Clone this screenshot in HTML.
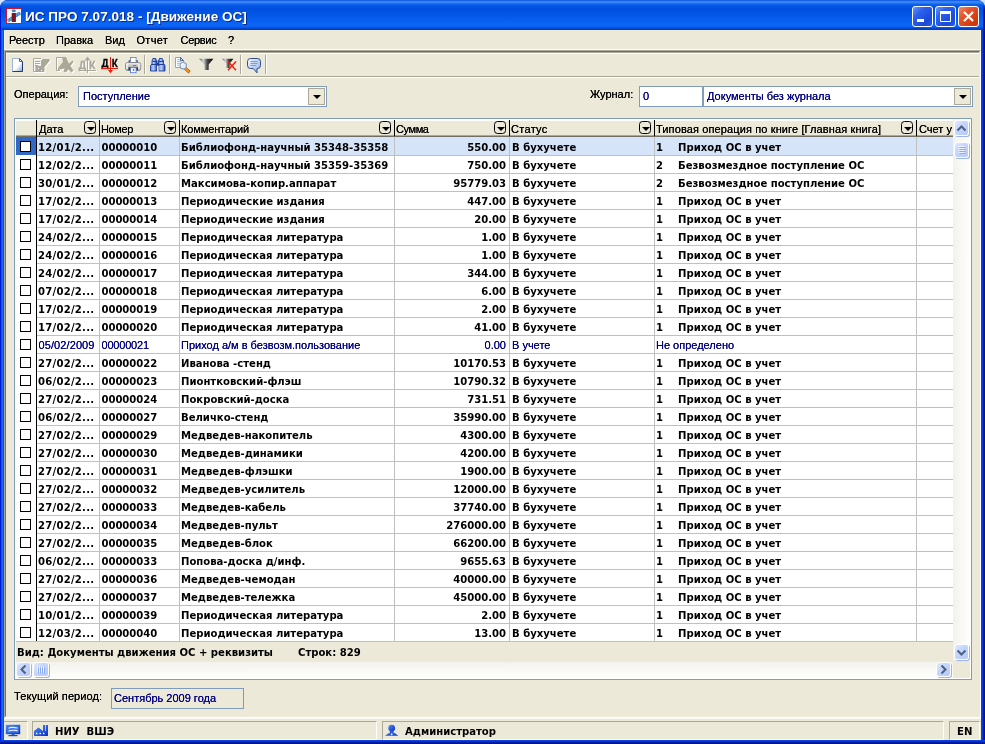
<!DOCTYPE html>
<html lang="ru">
<head>
<meta charset="utf-8">
<title>ИС ПРО 7.07.018 - [Движение ОС]</title>
<style>
html,body{margin:0;padding:0;}
body{width:985px;height:744px;overflow:hidden;background:#d4e2f6;position:relative;
 font-family:"Liberation Sans","DejaVu Sans",sans-serif;font-size:11px;color:#000;}
*{box-sizing:border-box;}
.abs,.win *{position:absolute;}
.win{position:absolute;left:0;top:0;width:985px;height:744px;border-radius:8px 8px 0 0;overflow:hidden;will-change:transform;
 background:#0054e3;}
/* title bar */
.title{left:0;top:0;width:985px;height:30px;
 background:linear-gradient(180deg,#0844d8 0px,#2b7af0 1px,#3d8ef8 2px,#2a78f2 3px,#0f60ea 4.5px,#0455e4 6px,#0050e0 9px,#0355e6 14px,#0860f0 21px,#0c66f6 25px,#0a5eee 27px,#0046d2 28.5px,#0038c0 30px);}
.frameL{left:0;top:30px;width:4px;height:714px;background:linear-gradient(90deg,#0019cf 0,#0019cf 1px,#0c55ec 1px,#0c55ec 2px,#166cf4 2px,#166cf4 3px,#0a50e0 3px);}
.frameR{left:981px;top:30px;width:4px;height:714px;background:linear-gradient(90deg,#0a40e6 0,#0a40e6 1px,#0838de 1px,#0838de 2px,#001fae 2px,#001fae 3px,#00138c 3px);}
.frameB{left:0;top:740px;width:985px;height:4px;background:linear-gradient(180deg,#0a40e6 0,#0a40e6 1px,#0632d4 1px,#0632d4 2px,#001ca0 2px,#001ca0 3px,#00138c 3px);}
.tedgeL{left:0;top:4px;width:1px;height:26px;background:linear-gradient(180deg,rgba(0,25,207,0),#0019cf 6px);}
.tedgeR{left:983px;top:4px;width:2px;height:26px;background:linear-gradient(90deg,#001fae 0,#001fae 1px,#00138c 1px);-webkit-mask-image:linear-gradient(180deg,transparent,#000 6px);mask-image:linear-gradient(180deg,transparent,#000 6px);}
.ttext{left:25px;top:7.5px;height:18px;line-height:18px;white-space:pre;color:#fff;font-weight:bold;letter-spacing:0.04px;
 font-family:"Liberation Sans","DejaVu Sans",sans-serif;font-size:13.5px;text-shadow:1px 1px 0 #0a2a8c;}
.appico{left:6px;top:8px;width:16px;height:16px;}
.tb{top:6px;width:21px;height:21px;border:1px solid #fff;border-radius:3px;
 background:linear-gradient(135deg,#6a98f8 0%,#2e62ee 30%,#1b48d8 75%,#2a5ce8 100%);}
.tb.close{background:linear-gradient(135deg,#f08868 0%,#e4542c 35%,#d23c10 75%,#c83408 100%);}
/* client */
.client{left:4px;top:30px;width:977px;height:710px;background:#ece9d8;border-left:1px solid #f8f3e2;border-right:1px solid #fbf6e4;}
.menu span{top:34px;height:13px;line-height:13px;white-space:pre;}
.mdi{left:4px;top:50px;width:977px;height:668px;background:#ece9d8;
 border-top:1px solid #aca899;border-left:1px solid #aca899;border-right:1px solid #fff;border-bottom:1px solid #fff;}
.mdi2{left:5px;top:51px;width:975px;height:666px;border-top:1px solid #716f64;border-left:1px solid #716f64;border-right:1px solid #ece9d8;border-bottom:1px solid #ece9d8;}
.toolbar{left:6px;top:52px;width:973px;height:24px;border-top:1px solid #aca899;border-left:1px solid #f6f3e6;}
.toolbar:after{content:"";position:absolute;left:0;top:0;width:972px;height:1px;background:#fff;}
.menuline{left:4px;top:49px;width:977px;height:1px;background:#fff;}
.tbline{left:6px;top:76px;width:973px;height:2px;border-top:1px solid #aca899;border-bottom:1px solid #fff;}
.tsep{top:55px;width:2px;height:19px;border-left:1px solid #aca899;border-right:1px solid #fff;}
.lbl{white-space:pre;height:13px;line-height:13px;}
.edit{background:#fff;border:1px solid #7f9db9;}
.edit span{left:4px;top:3px;height:13px;line-height:13px;color:#000080;white-space:pre;}
.dd{width:17px;height:17px;background:#ece9d8;border:1px solid #aca899;}
.dd:after{content:"";position:absolute;left:3.5px;top:6px;border-left:4px solid transparent;border-right:4px solid transparent;border-top:4px solid #000;}
/* grid */
.grid{left:14px;top:118px;width:958px;height:562px;border:1px solid #7f9db9;background:#fff;}
.ghead{left:16px;top:120px;width:937px;height:15px;background:#ece9d8;border-top:1px solid #fff;}
.gheadl{left:16px;top:135px;width:937px;height:2px;border-top:1px solid #aca899;border-bottom:1px solid #716f64;}
.hs{top:120px;width:1px;height:16px;background:#000;}
.ht{top:123px;height:13px;line-height:13px;white-space:pre;}
.fi{top:121px;width:12px;height:13px;border:1px solid #000;border-radius:3.5px;}
.fi:after{content:"";position:absolute;left:1.5px;top:5px;border-left:4px solid transparent;border-right:4px solid transparent;border-top:4px solid #000;}
.vl{top:137px;width:1px;height:505px;background:#c0c0c0;}
.row{left:16px;width:937px;height:19px;border-bottom:1px solid #c0c0c0;
 font-family:"DejaVu Sans Condensed","Liberation Sans",sans-serif;font-weight:bold;font-size:11.2px;}
.row.sel{background:#d6e4fa;}
.row.nrm{font-family:"Liberation Sans","DejaVu Sans",sans-serif;font-weight:normal;font-size:11px;color:#000080;}
.row.nrm .c1{letter-spacing:0.1px;left:22.5px;}
.row.nrm .c2{letter-spacing:-0.2px;}
.row .ind{left:0;top:0;width:20px;height:18px;background:#fff;}
.row.sel .ind{background:#316ac5;}
.row .cb{left:4px;top:4px;width:11px;height:11px;border:1px solid #000;background:#fff;}
.c{top:4px;height:13px;line-height:13px;white-space:pre;}
.c1{left:22px;letter-spacing:0.25px;}.c2{left:85.5px;letter-spacing:-0.05px;}.c3{left:165px;}.c4{right:447px;}.c5{left:496px;}.c6{left:640px;}.c7{left:662px;}
.gstat{left:16px;top:642px;width:937px;height:20px;background:#ece9d8;}
.gstat span{top:4px;height:13px;line-height:13px;white-space:pre;font-weight:bold;font-family:"DejaVu Sans Condensed","Liberation Sans",sans-serif;font-size:11.2px;}
/* scrollbars */
.vsb{left:953px;top:119px;width:17px;height:542px;background:linear-gradient(90deg,#f3f1ec 0,#f8f7f3 40%,#fefefb 100%);}
.hsb{left:16px;top:662px;width:937px;height:16px;background:linear-gradient(180deg,#f3f1ec 0,#f8f7f3 40%,#fefefb 100%);}
.corner{left:953px;top:661px;width:17px;height:17px;background:#ece9d8;}
.sbb{width:15px;height:15px;border:1px solid #fff;border-radius:3px;background:linear-gradient(135deg,#e1eafe 0%,#c6d6fc 40%,#b5c9f8 100%);box-shadow:1px 1px 0 #9db4e8;}
.ht,.lbl,.menu span,.edit span,.row.nrm .c{text-shadow:0 0 0 currentColor;}
/* status bar */
.sbar{left:4px;top:718px;width:977px;height:22px;background:#ece9d8;border-top:1px solid #f8f7f2;}
.pnl{top:721px;height:19px;border-top:1px solid #aca899;border-left:1px solid #aca899;border-right:1px solid #fff;border-bottom:1px solid #fff;}
.st{top:725px;height:13px;line-height:13px;white-space:pre;font-weight:bold;font-family:"DejaVu Sans Condensed","Liberation Sans",sans-serif;font-size:11.2px;}
</style>
</head>
<body>
<div class="win">
 <div class="title"></div>
 <div class="tedgeL"></div><div class="tedgeR"></div>
 <div class="frameL"></div><div class="frameR"></div><div class="frameB"></div>
 <svg class="appico" viewBox="0 0 16 16">
  <rect x="0.5" y="0.5" width="15" height="15" fill="#fff" stroke="#d4142c"/>
  <path d="M1.8 12.8 L14.2 4.8" stroke="#3f8ac8" stroke-width="3.3" fill="none"/>
  <path d="M1.8 12.8 L14.2 4.8" stroke="#8cbce4" stroke-width="1.2" stroke-dasharray="1.4 1.6" fill="none"/>
  <rect x="5.7" y="5" width="4.2" height="9" fill="#7c1428"/>
  <ellipse cx="7.8" cy="2.8" rx="2.1" ry="1.5" fill="#3f8ac8"/>
 </svg>
 <div class="ttext">ИС ПРО 7.07.018 - [Движение ОС]</div>
 <div class="tb" style="left:912px"><svg style="left:0;top:0" width="19" height="19" viewBox="0 0 19 19"><rect x="4" y="12" width="7" height="3" fill="#fff"/></svg></div>
 <div class="tb" style="left:935px"><svg style="left:0;top:0" width="19" height="19" viewBox="0 0 19 19"><path d="M4.5 6 H14.5 V14.5 H4.5 Z M4.5 4.5 H14.5" fill="none" stroke="#fff" stroke-width="1"/><rect x="4" y="4" width="11" height="3" fill="#fff"/></svg></div>
 <div class="tb close" style="left:958px"><svg style="left:0;top:0" width="19" height="19" viewBox="0 0 19 19"><path d="M5 5 L14 14 M14 5 L5 14" stroke="#fff" stroke-width="2.2" stroke-linecap="butt"/></svg></div>

 <div class="client"></div>
 <div class="menu">
  <span style="left:9px">Реестр</span><span style="left:56px">Правка</span><span style="left:105px">Вид</span><span style="left:136.5px;letter-spacing:0.3px">Отчет</span><span style="left:180.5px;letter-spacing:-0.3px">Сервис</span><span style="left:228px">?</span>
 </div>
 <div class="menuline"></div><div class="mdi"></div><div class="mdi2"></div>
 <div class="toolbar"></div><div class="tbline"></div>
 <div class="tsep" style="left:144px"></div><div class="tsep" style="left:169px"></div><div class="tsep" style="left:240px"></div><div class="tsep" style="left:265px"></div>
 <svg class="ticons" style="left:0;top:50px" width="300" height="30" viewBox="0 50 300 30">
  <defs>
   <linearGradient id="gdoc" x1="1" y1="1" x2="0.3" y2="0.3"><stop offset="0" stop-color="#8fa6cc"/><stop offset="0.6" stop-color="#e4ebf6"/><stop offset="1" stop-color="#fff"/></linearGradient>
   <linearGradient id="gprn" x1="0" y1="0" x2="0" y2="1"><stop offset="0" stop-color="#f2f2f2"/><stop offset="0.5" stop-color="#b9b9b9"/><stop offset="1" stop-color="#6e6e6e"/></linearGradient>
   <linearGradient id="gfun" x1="0" y1="0" x2="1" y2="0"><stop offset="0" stop-color="#5a5a5a"/><stop offset="0.3" stop-color="#d4d4d4"/><stop offset="0.58" stop-color="#484848"/><stop offset="1" stop-color="#000"/></linearGradient>
   <linearGradient id="gbub" x1="0" y1="0" x2="1" y2="1"><stop offset="0" stop-color="#f4f8ff"/><stop offset="1" stop-color="#8fb0e6"/></linearGradient>
   <linearGradient id="gbin" x1="0" y1="0" x2="1" y2="0"><stop offset="0" stop-color="#5a8aec"/><stop offset="0.45" stop-color="#b9cffb"/><stop offset="1" stop-color="#1f45a8"/></linearGradient>
  </defs>
  <!-- new document -->
  <path d="M12.5 58.5 H19.5 L22.5 61.5 V71.5 H12.5 Z" fill="#fff" stroke="#9db6e0"/>
  <path d="M22 62 V71 H14 Z" fill="url(#gdoc)"/>
  <path d="M19.5 58.5 L22.5 61.5 V71.5 H12.5" fill="none" stroke="#1f3d73"/>
  <path d="M19.5 58.5 V61.5 H22.5" fill="none" stroke="#4d6ea8"/>
  <!-- edit (disabled) -->
  <g id="ic2w" transform="translate(1 1)" fill="#fff" stroke="#fff">
   <path d="M41 58.5 H33.5 V71.5 H44" fill="none"/>
   <path d="M35 61.5H40M35 63.5H40M35 65.5H38" fill="none"/>
   <path d="M49.5 59 H42.5 L41 61 V66 H35.5 V71.5 H44.5 V67 L49.5 61 Z" stroke="none"/>
  </g>
  <g fill="#aca899" stroke="#aca899">
   <path d="M41 58.5 H33.5 V71.5 H44" fill="none"/>
   <path d="M35 61.5H40M35 63.5H40M35 65.5H38" fill="none"/>
   <path d="M49.5 59 H42.5 L41 61 V66 H35.5 V71.5 H44.5 V67 L49.5 61 Z" stroke="none"/>
   <path d="M38 68.5h1M41 70.5h1" stroke="#fff"/>
  </g>
  <!-- delete (disabled) -->
  <g transform="translate(1 1)" fill="#fff" stroke="#fff">
   <path d="M63 57.5 H56.5 V70.5 H60" fill="none"/>
   <path d="M62 57 H66 L69 63.5 L72.5 60.5 L73.5 62 L70.5 66 L73.5 70.5 L71.5 72.5 L68.5 69.5 L66 72.5 L63.5 71.5 L64.5 68.5 L58 70 V68 L63 62 Z" stroke="none"/>
  </g>
  <g fill="#aca899" stroke="#aca899">
   <path d="M63 57.5 H56.5 V70.5 H60" fill="none"/>
   <path d="M62 57 H66 L69 63.5 L72.5 60.5 L73.5 62 L70.5 66 L73.5 70.5 L71.5 72.5 L68.5 69.5 L66 72.5 L63.5 71.5 L64.5 68.5 L58 70 V68 L63 62 Z" stroke="none"/>
  </g>
  <!-- DK up (disabled) -->
  <g font-family="Liberation Sans, DejaVu Sans, sans-serif" font-weight="bold" font-size="11">
   <g fill="#fff" stroke="#fff" transform="translate(1 1)">
    <text x="78.8" y="68.6" stroke-width="0.3" textLength="7.4" lengthAdjust="spacingAndGlyphs">Д</text><text x="89" y="68.6" stroke-width="0.3" textLength="6.4" lengthAdjust="spacingAndGlyphs">К</text>
    <path d="M79 70.5H96M87.5 58V73" fill="none"/><path d="M84.5 60.5 L87.5 56.5 L90.5 60.5 Z" stroke="none"/>
   </g>
   <g fill="#aca899" stroke="#aca899">
    <text x="78.8" y="68.6" stroke-width="0.3" textLength="7.4" lengthAdjust="spacingAndGlyphs">Д</text><text x="89" y="68.6" stroke-width="0.3" textLength="6.4" lengthAdjust="spacingAndGlyphs">К</text>
    <path d="M79 70.5H96M87.5 58V73" fill="none"/><path d="M84.5 60.5 L87.5 56.5 L90.5 60.5 Z" stroke="none"/>
   </g>
   <!-- DK down -->
   <text x="101.6" y="67" fill="#000" stroke="#000" stroke-width="0.3" textLength="7" lengthAdjust="spacingAndGlyphs">Д</text><text x="111.8" y="67" fill="#000" stroke="#000" stroke-width="0.3" textLength="6" lengthAdjust="spacingAndGlyphs">К</text>
   <path d="M102 68.5H118M110.5 57V71" fill="none" stroke="#f01808"/><path d="M108 70 H113 L110.5 73.2 Z" fill="#f01808"/>
  </g>
  <!-- printer -->
  <rect x="128.5" y="60" width="9.5" height="3.5" rx="1" fill="#6c6c70"/>
  <rect x="130.5" y="57.5" width="5.6" height="5" fill="#fff" stroke="#6f8cc4" stroke-width="0.9"/>
  <rect x="125.5" y="62.5" width="15.2" height="8" rx="2" fill="url(#gprn)" stroke="#8a8a90"/>
  <rect x="126" y="63.5" width="2.2" height="6" fill="#f4f4f4" opacity="0.8"/><rect x="138" y="63.5" width="2.2" height="6" fill="#f4f4f4" opacity="0.8"/>
  <rect x="128.5" y="67.3" width="9.5" height="3" fill="#3c3c40"/>
  <rect x="133" y="65" width="3.2" height="1.1" fill="#2f8af0"/>
  <rect x="130.5" y="67.7" width="5.6" height="5" fill="#fff" stroke="#5d80c8" stroke-width="0.9"/>
  <rect x="132.8" y="69.2" width="1.5" height="1.5" fill="#2f50e0"/>
  <!-- binoculars -->
  <g stroke="#1f3f98" stroke-width="0.9" fill="url(#gbin)">
   <path d="M152.8 60.3 V58.5 H155.8 V60.3 H157 V64 V71 H150.5 V65.5 L152 64 V60.3 Z"/>
   <path d="M159.3 60.3 V58.5 H162.3 V60.3 H163.5 V64 L165 65.5 V71 H158.5 V64 V60.3 Z"/>
  </g>
  <path d="M151 64.5H157M158.5 64.5H164.5M152.5 61.5H156.5M159 61.5H163" stroke="#1f3f98" fill="none"/>
  <rect x="156.8" y="62.8" width="2" height="2.4" fill="#1f3f98"/>
  <rect x="157" y="66" width="1.6" height="5.5" fill="#ece9d8"/>
  <!-- preview -->
  <path d="M175.5 57.5 H180.5 L183.5 60.5 V67.5 H175.5 Z" fill="#fff" stroke="#8aa2d8"/>
  <path d="M180.5 57.5 L183.5 60.5 H180.5 Z" fill="#dfe8f8" stroke="#3a5a98" stroke-width="0.9"/>
  <path d="M177 59.8H180M177 61.6H181.5M177 63.4H180M177 65.2H179" stroke="#8fb0e8" fill="none" stroke-width="0.9"/>
  <path d="M185.2 68.4 L189.6 72.2" stroke="#8a5414" stroke-width="3.2" fill="none"/>
  <path d="M185.4 68.6 L189.2 71.9" stroke="#f59a1c" stroke-width="2" fill="none"/>
  <circle cx="183.2" cy="65.7" r="3.2" fill="#e6f0fc" stroke="#8494b4" stroke-width="1.1"/>
  <path d="M181.3 65 A2 2 0 0 1 183.5 63.5" stroke="#fff" stroke-width="1" fill="none"/>
  <!-- funnel -->
  <path d="M199 58.7 H213.4 L208.7 64.5 V70 H204.5 V64.5 Z" fill="url(#gfun)"/>
  <!-- funnel x -->
  <path d="M222 58.7 H233.4 L229.7 63.5 V68 H226.3 V63.5 Z" fill="url(#gfun)"/>
  <path d="M228 61.5 L236 70.3 M236 61.5 L228 70.3" stroke="#f21c0c" stroke-width="1.5" fill="none"/>
  <!-- comment -->
  <path d="M250.5 58.5 H257.5 Q260.5 58.5 260.5 61.5 V65.5 Q260.5 68.5 257.5 68.5 H257 V72.8 L253.2 68.5 H250.5 Q247.5 68.5 247.5 65.5 V61.5 Q247.5 58.5 250.5 58.5 Z" fill="url(#gbub)" stroke="#2c4c8c"/>
  <path d="M250.5 61.5H257.5M250.5 63.5H257.5M250.5 65.5H256" stroke="#7d9cd3" fill="none"/>
 </svg>

 <div class="lbl" style="left:14px;top:88px">Операция:</div>
 <div class="edit" style="left:78px;top:86px;width:249px;height:21px"><span>Поступление</span><i class="dd" style="left:229px;top:1px"></i></div>
 <div class="lbl" style="left:590px;top:88px">Журнал:</div>
 <div class="edit" style="left:639px;top:86px;width:64px;height:21px"><span style="left:3px">0</span></div>
 <div class="edit" style="left:703px;top:86px;width:270px;height:21px"><span style="left:3px">Документы без журнала</span><i class="dd" style="left:250px;top:1px"></i></div>

 <div class="grid"></div>
 <div class="ghead"></div><div class="gheadl"></div>
 <div class="row sel" style="top:137px"><i class="ind"></i><i class="cb"></i><span class="c c1">12/01/2...</span><span class="c c2">00000010</span><span class="c c3">Библиофонд-научный 35348-35358</span><span class="c c4">550.00</span><span class="c c5">В бухучете</span><span class="c c6">1</span><span class="c c7">Приход ОС в учет</span></div>
<div class="row" style="top:155px"><i class="ind"></i><i class="cb"></i><span class="c c1">12/02/2...</span><span class="c c2">00000011</span><span class="c c3">Библиофонд-научный 35359-35369</span><span class="c c4">750.00</span><span class="c c5">В бухучете</span><span class="c c6">2</span><span class="c c7">Безвозмездное поступление ОС</span></div>
<div class="row" style="top:173px"><i class="ind"></i><i class="cb"></i><span class="c c1">30/01/2...</span><span class="c c2">00000012</span><span class="c c3">Максимова-копир.аппарат</span><span class="c c4">95779.03</span><span class="c c5">В бухучете</span><span class="c c6">2</span><span class="c c7">Безвозмездное поступление ОС</span></div>
<div class="row" style="top:191px"><i class="ind"></i><i class="cb"></i><span class="c c1">17/02/2...</span><span class="c c2">00000013</span><span class="c c3">Периодические издания</span><span class="c c4">447.00</span><span class="c c5">В бухучете</span><span class="c c6">1</span><span class="c c7">Приход ОС в учет</span></div>
<div class="row" style="top:209px"><i class="ind"></i><i class="cb"></i><span class="c c1">17/02/2...</span><span class="c c2">00000014</span><span class="c c3">Периодические издания</span><span class="c c4">20.00</span><span class="c c5">В бухучете</span><span class="c c6">1</span><span class="c c7">Приход ОС в учет</span></div>
<div class="row" style="top:227px"><i class="ind"></i><i class="cb"></i><span class="c c1">24/02/2...</span><span class="c c2">00000015</span><span class="c c3">Периодическая литература</span><span class="c c4">1.00</span><span class="c c5">В бухучете</span><span class="c c6">1</span><span class="c c7">Приход ОС в учет</span></div>
<div class="row" style="top:245px"><i class="ind"></i><i class="cb"></i><span class="c c1">24/02/2...</span><span class="c c2">00000016</span><span class="c c3">Периодическая литература</span><span class="c c4">1.00</span><span class="c c5">В бухучете</span><span class="c c6">1</span><span class="c c7">Приход ОС в учет</span></div>
<div class="row" style="top:263px"><i class="ind"></i><i class="cb"></i><span class="c c1">24/02/2...</span><span class="c c2">00000017</span><span class="c c3">Периодическая литература</span><span class="c c4">344.00</span><span class="c c5">В бухучете</span><span class="c c6">1</span><span class="c c7">Приход ОС в учет</span></div>
<div class="row" style="top:281px"><i class="ind"></i><i class="cb"></i><span class="c c1">07/02/2...</span><span class="c c2">00000018</span><span class="c c3">Периодическая литература</span><span class="c c4">6.00</span><span class="c c5">В бухучете</span><span class="c c6">1</span><span class="c c7">Приход ОС в учет</span></div>
<div class="row" style="top:299px"><i class="ind"></i><i class="cb"></i><span class="c c1">17/02/2...</span><span class="c c2">00000019</span><span class="c c3">Периодическая литература</span><span class="c c4">2.00</span><span class="c c5">В бухучете</span><span class="c c6">1</span><span class="c c7">Приход ОС в учет</span></div>
<div class="row" style="top:317px"><i class="ind"></i><i class="cb"></i><span class="c c1">17/02/2...</span><span class="c c2">00000020</span><span class="c c3">Периодическая литература</span><span class="c c4">41.00</span><span class="c c5">В бухучете</span><span class="c c6">1</span><span class="c c7">Приход ОС в учет</span></div>
<div class="row nrm" style="top:335px"><i class="ind"></i><i class="cb"></i><span class="c c1">05/02/2009</span><span class="c c2">00000021</span><span class="c c3">Приход а/м в безвозм.пользование</span><span class="c c4">0.00</span><span class="c c5">В учете</span><span class="c c6">Не определено</span></div>
<div class="row" style="top:353px"><i class="ind"></i><i class="cb"></i><span class="c c1">27/02/2...</span><span class="c c2">00000022</span><span class="c c3">Иванова -стенд</span><span class="c c4">10170.53</span><span class="c c5">В бухучете</span><span class="c c6">1</span><span class="c c7">Приход ОС в учет</span></div>
<div class="row" style="top:371px"><i class="ind"></i><i class="cb"></i><span class="c c1">06/02/2...</span><span class="c c2">00000023</span><span class="c c3">Пионтковский-флэш</span><span class="c c4">10790.32</span><span class="c c5">В бухучете</span><span class="c c6">1</span><span class="c c7">Приход ОС в учет</span></div>
<div class="row" style="top:389px"><i class="ind"></i><i class="cb"></i><span class="c c1">27/02/2...</span><span class="c c2">00000024</span><span class="c c3">Покровский-доска</span><span class="c c4">731.51</span><span class="c c5">В бухучете</span><span class="c c6">1</span><span class="c c7">Приход ОС в учет</span></div>
<div class="row" style="top:407px"><i class="ind"></i><i class="cb"></i><span class="c c1">06/02/2...</span><span class="c c2">00000027</span><span class="c c3">Величко-стенд</span><span class="c c4">35990.00</span><span class="c c5">В бухучете</span><span class="c c6">1</span><span class="c c7">Приход ОС в учет</span></div>
<div class="row" style="top:425px"><i class="ind"></i><i class="cb"></i><span class="c c1">27/02/2...</span><span class="c c2">00000029</span><span class="c c3">Медведев-накопитель</span><span class="c c4">4300.00</span><span class="c c5">В бухучете</span><span class="c c6">1</span><span class="c c7">Приход ОС в учет</span></div>
<div class="row" style="top:443px"><i class="ind"></i><i class="cb"></i><span class="c c1">27/02/2...</span><span class="c c2">00000030</span><span class="c c3">Медведев-динамики</span><span class="c c4">4200.00</span><span class="c c5">В бухучете</span><span class="c c6">1</span><span class="c c7">Приход ОС в учет</span></div>
<div class="row" style="top:461px"><i class="ind"></i><i class="cb"></i><span class="c c1">27/02/2...</span><span class="c c2">00000031</span><span class="c c3">Медведев-флэшки</span><span class="c c4">1900.00</span><span class="c c5">В бухучете</span><span class="c c6">1</span><span class="c c7">Приход ОС в учет</span></div>
<div class="row" style="top:479px"><i class="ind"></i><i class="cb"></i><span class="c c1">27/02/2...</span><span class="c c2">00000032</span><span class="c c3">Медведев-усилитель</span><span class="c c4">12000.00</span><span class="c c5">В бухучете</span><span class="c c6">1</span><span class="c c7">Приход ОС в учет</span></div>
<div class="row" style="top:497px"><i class="ind"></i><i class="cb"></i><span class="c c1">27/02/2...</span><span class="c c2">00000033</span><span class="c c3">Медведев-кабель</span><span class="c c4">37740.00</span><span class="c c5">В бухучете</span><span class="c c6">1</span><span class="c c7">Приход ОС в учет</span></div>
<div class="row" style="top:515px"><i class="ind"></i><i class="cb"></i><span class="c c1">27/02/2...</span><span class="c c2">00000034</span><span class="c c3">Медведев-пульт</span><span class="c c4">276000.00</span><span class="c c5">В бухучете</span><span class="c c6">1</span><span class="c c7">Приход ОС в учет</span></div>
<div class="row" style="top:533px"><i class="ind"></i><i class="cb"></i><span class="c c1">27/02/2...</span><span class="c c2">00000035</span><span class="c c3">Медведев-блок</span><span class="c c4">66200.00</span><span class="c c5">В бухучете</span><span class="c c6">1</span><span class="c c7">Приход ОС в учет</span></div>
<div class="row" style="top:551px"><i class="ind"></i><i class="cb"></i><span class="c c1">06/02/2...</span><span class="c c2">00000033</span><span class="c c3">Попова-доска д/инф.</span><span class="c c4">9655.63</span><span class="c c5">В бухучете</span><span class="c c6">1</span><span class="c c7">Приход ОС в учет</span></div>
<div class="row" style="top:569px"><i class="ind"></i><i class="cb"></i><span class="c c1">27/02/2...</span><span class="c c2">00000036</span><span class="c c3">Медведев-чемодан</span><span class="c c4">40000.00</span><span class="c c5">В бухучете</span><span class="c c6">1</span><span class="c c7">Приход ОС в учет</span></div>
<div class="row" style="top:587px"><i class="ind"></i><i class="cb"></i><span class="c c1">27/02/2...</span><span class="c c2">00000037</span><span class="c c3">Медведев-тележка</span><span class="c c4">45000.00</span><span class="c c5">В бухучете</span><span class="c c6">1</span><span class="c c7">Приход ОС в учет</span></div>
<div class="row" style="top:605px"><i class="ind"></i><i class="cb"></i><span class="c c1">10/01/2...</span><span class="c c2">00000039</span><span class="c c3">Периодическая литература</span><span class="c c4">2.00</span><span class="c c5">В бухучете</span><span class="c c6">1</span><span class="c c7">Приход ОС в учет</span></div>
<div class="row" style="top:623px"><i class="ind"></i><i class="cb"></i><span class="c c1">12/03/2...</span><span class="c c2">00000040</span><span class="c c3">Периодическая литература</span><span class="c c4">13.00</span><span class="c c5">В бухучете</span><span class="c c6">1</span><span class="c c7">Приход ОС в учет</span></div>
 <div class="vl" style="left:99px"></div><div class="vl" style="left:179px"></div><div class="vl" style="left:394px"></div><div class="vl" style="left:509px"></div><div class="vl" style="left:654px"></div><div class="vl" style="left:916px"></div>
 <div class="vl" style="left:36px;background:#000;top:120px;height:521px"></div>
 <div class="hs" style="left:36px"></div><div class="hs" style="left:99px"></div><div class="hs" style="left:179px"></div><div class="hs" style="left:394px"></div><div class="hs" style="left:509px"></div><div class="hs" style="left:654px"></div><div class="hs" style="left:916px"></div>
 <span class="ht" style="left:39px">Дата</span><span class="ht" style="left:101px;letter-spacing:-0.35px">Номер</span><span class="ht" style="left:181px;letter-spacing:-0.12px">Комментарий</span><span class="ht" style="left:396px;letter-spacing:-0.4px">Сумма</span><span class="ht" style="left:511px;letter-spacing:0.3px">Статус</span><span class="ht" style="left:656px;letter-spacing:0.12px">Типовая операция по книге [Главная книга]</span><span class="ht" style="left:919px">Счет у</span>
 <i class="fi" style="left:84px"></i><i class="fi" style="left:164px"></i><i class="fi" style="left:379px"></i><i class="fi" style="left:494px"></i><i class="fi" style="left:639px"></i><i class="fi" style="left:901px"></i>
 <div class="gstat"><span style="left:1px">Вид: Документы движения ОС + реквизиты</span><span style="left:282px">Строк: 829</span></div>
 <div class="vsb"></div><div class="hsb"></div><div class="corner"></div>
 <div class="sbb" style="left:954px;top:120px;height:16px"><svg style="left:0;top:0.5px" width="13" height="13" viewBox="0 0 13 13"><path d="M2.5 8.5 L6.5 4.5 L10.5 8.5" fill="none" stroke="#4d6185" stroke-width="2"/></svg></div>
 <div class="sbb" style="left:954px;top:142px;height:16px"><svg style="left:0;top:0" width="13" height="14" viewBox="0 0 13 14"><path d="M3.5 3.5H9.5M3.5 5.5H9.5M3.5 7.5H9.5M3.5 9.5H9.5" stroke="#eef4fe" stroke-width="1"/><path d="M4.5 4.5H10.5M4.5 6.5H10.5M4.5 8.5H10.5M4.5 10.5H10.5" stroke="#8caaf0" stroke-width="1"/></svg></div>
 <div class="sbb" style="left:954px;top:644px;height:16px"><svg style="left:0;top:0.5px" width="13" height="13" viewBox="0 0 13 13"><path d="M2.5 4.5 L6.5 8.5 L10.5 4.5" fill="none" stroke="#4d6185" stroke-width="2"/></svg></div>
 <div class="sbb" style="left:16px;top:662px"><svg style="left:0;top:0" width="13" height="13" viewBox="0 0 13 13"><path d="M8.5 2.5 L4.5 6.5 L8.5 10.5" fill="none" stroke="#4d6185" stroke-width="2"/></svg></div>
 <div class="sbb" style="left:33px;top:662px;width:16px"><svg style="left:0;top:0" width="13" height="13" viewBox="0 0 13 13"><path d="M3.5 3.5V9.5M5.5 3.5V9.5M7.5 3.5V9.5M9.5 3.5V9.5" stroke="#eef4fe" stroke-width="1"/><path d="M4.5 4.5V10.5M6.5 4.5V10.5M8.5 4.5V10.5M10.5 4.5V10.5" stroke="#8caaf0" stroke-width="1"/></svg></div>
 <div class="sbb" style="left:936px;top:662px"><svg style="left:0;top:0" width="13" height="13" viewBox="0 0 13 13"><path d="M4.5 2.5 L8.5 6.5 L4.5 10.5" fill="none" stroke="#4d6185" stroke-width="2"/></svg></div>

 <div class="lbl" style="left:14px;top:690px;letter-spacing:0.1px">Текущий период:</div>
 <div class="edit" style="left:111px;top:688px;width:133px;height:21px;background:#ece9d8"><span style="left:2px">Сентябрь 2009 года</span></div>

 <div class="sbar"></div>
 <div class="pnl" style="left:4px;width:24px;border-left:none"></div>
 <div class="pnl" style="left:32px;width:345px"></div>
 <div class="pnl" style="left:382px;width:562px"></div>
 <div class="pnl" style="left:949px;width:31px"></div>
 <span class="st" style="left:55px">НИУ  ВШЭ</span>
 <span class="st" style="left:405px">Администратор</span>
 <span class="st" style="left:957px">EN</span>
 <svg style="left:0;top:720px" width="420" height="20" viewBox="0 720 420 20">
  <defs><linearGradient id="gblu" x1="0" y1="0" x2="1" y2="1"><stop offset="0" stop-color="#4f8df5"/><stop offset="1" stop-color="#0a2fc0"/></linearGradient></defs>
  <!-- monitor -->
  <rect x="6.5" y="725.5" width="13" height="8" fill="#3a74ea" stroke="url(#gblu)" stroke-width="1.4"/>
  <path d="M8.5 728.2 Q11.5 726.6 17.5 728 M8.5 731 Q12 729.6 17.5 730.6" stroke="#eef4ff" stroke-width="1.1" fill="none"/>
  <rect x="11.5" y="734" width="3" height="1" fill="#2a5ad8"/><rect x="8.5" y="735" width="9" height="1.2" fill="#1f45c8"/>
  <!-- factory -->
  <path d="M34 736 V731 L38.5 727.5 L43 731 V725 H45 V731 H45.8 V725 H48 V736 Z" fill="url(#gblu)"/>
  <path d="M36 733.5h1.4M39.5 733.5h1.4M43 733.5h1.4" stroke="#fff" stroke-width="1.4"/>
  <!-- user -->
  <circle cx="391.7" cy="728.2" r="3.4" fill="url(#gblu)"/>
  <path d="M385 735.8 L389.5 732.5 H394 L398.3 735.8 Z" fill="url(#gblu)"/>
  <path d="M390 731 h3.4 v2 h-3.4z" fill="#2a5ad8"/>
  <path d="M391.7 733 l-1 1.4 l1 1 l1 -1 z" fill="#dfeaff"/>
 </svg>
</div>
</body>
</html>
